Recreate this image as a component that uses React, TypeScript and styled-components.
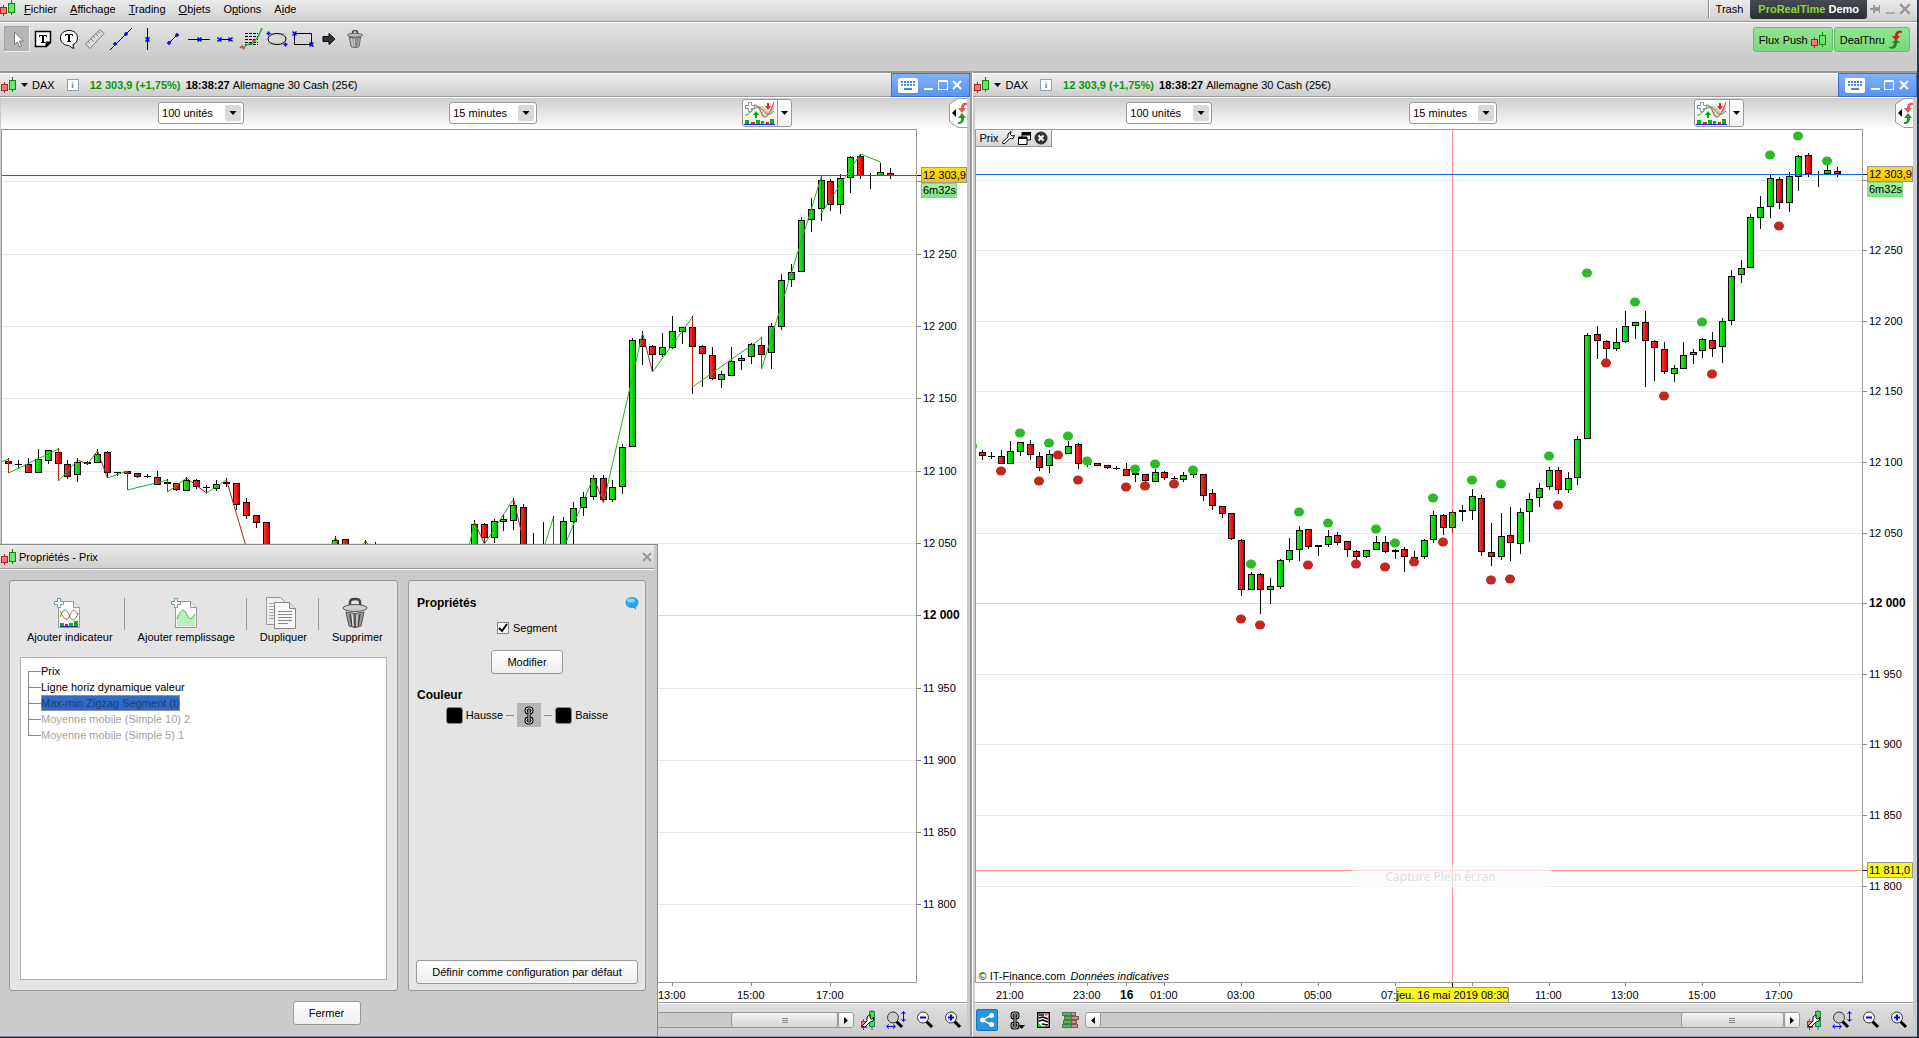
import React from 'react';
import styled, { createGlobalStyle, css } from 'styled-components';

const Global = createGlobalStyle`
  * { box-sizing: border-box; }
  html, body { margin: 0; height: 100%; background: #cbcbcb; }
  body, button, select, input {
    font: 11px/14px "Liberation Sans", Arial, sans-serif;
    color: #000;
  }
  button { margin: 0; padding: 0; border: 0; background: none; cursor: pointer; }
  svg { display: block; flex: none; }
`;

const LINE = '#999';

/* ---------- shell ---------- */

const Shell = styled.div`
  position: relative;
  display: flex;
  flex-direction: column;
  height: 100vh;
  overflow: hidden;
  border-right: 2px solid #2a3848;
  border-bottom: 1px solid #141e2c;
`;

const MenuBar = styled.header`
  display: flex;
  align-items: stretch;
  height: 23px;
  padding-right: 4px;
  background: linear-gradient(#ebebeb, #cecece);
  border-bottom: 1px solid #fff;
  box-shadow: inset 0 -1px ${LINE};
`;

const Menus = styled.nav`
  display: flex;
  align-items: center;
  gap: 13px;
  flex: 1;
  padding: 0 0 4px 8px;
`;

const MenuItem = styled.button`
  text-underline-offset: 1px;
`;

const Account = styled.span`
  margin-bottom: 4px;
  padding: 2px 7px;
  border-left: 1px solid #888;
  box-shadow: inset 1px 0 #fff;
`;

const Brand = styled.span`
  margin-bottom: 3px;
  padding: 2px 8px 0;
  border-radius: 0 0 3px 3px;
  background: linear-gradient(#454b50, #2a3036);
  color: #fff;
  font-weight: bold;
  em { color: #8fd62c; font-style: normal; }
`;

const ShellControls = styled.div`
  display: flex;
  align-items: center;
  gap: 4px;
  padding: 0 2px 4px 3px;
`;

const ToolBar = styled.div`
  display: flex;
  justify-content: space-between;
  height: 48px;
  padding: 3px 7px 0 4px;
  background: linear-gradient(#e2e2e2, #cbcbcb 70%);
`;

const Tools = styled.div`
  display: flex;
`;

const Tool = styled.button<{ $active?: boolean }>`
  display: grid;
  place-items: center;
  width: 26px;
  height: 26px;
  ${p => p.$active && css`
    background: #b6b6b6;
    box-shadow: inset -1px -1px #f0f0f0, inset 1px 1px #a5a5a5;
  `}
`;

const Services = styled.div`
  display: flex;
  gap: 1px;
  align-items: flex-start;
`;

const Service = styled.button`
  display: flex;
  align-items: center;
  gap: 3px;
  height: 25px;
  margin-top: 1px;
  padding: 0 5px;
  border: 1px solid #62c06a;
  border-radius: 3px;
  background: linear-gradient(#90e690, #7bd57b);
`;

const Desk = styled.main`
  display: flex;
  flex: 1;
  min-height: 0;
`;

/* ---------- chart window ---------- */

const Window = styled.section<{ $grow: number; $last?: boolean }>`
  display: flex;
  flex-direction: column;
  flex: ${p => p.$grow} 1 0;
  min-width: 0;
  border-top: 2px solid ${LINE};
  border-bottom: 1px solid ${LINE};
  ${p => (p.$last ? 'border-left: 1px solid #fff;' : `border-right: 2px solid ${LINE};`)}
`;

const WindowTitle = styled.div`
  display: flex;
  align-items: center;
  height: 24px;
  padding-left: 1px;
  background: linear-gradient(#eee, #cdcdcd);
  border-top: 1px solid #fff;
  border-bottom: 1px solid ${LINE};
`;

const Symbol = styled.button`
  display: flex;
  align-items: center;
  gap: 4px;
  margin-right: 12px;
  padding-left: 4px;
`;

const InfoButton = styled.button`
  width: 12px;
  height: 12px;
  margin-right: 11px;
  border: 1px solid #8fa4b0;
  background: #fff;
  color: #6d8798;
  font: bold 9px/9px "Liberation Serif", serif;
`;

const Quote = styled.strong`
  width: 96px;
  color: #0a980a;
  white-space: nowrap;
`;

const Clock = styled.strong`
  margin-right: 3px;
`;

const Name = styled.span`
  flex: 1;
  white-space: nowrap;
`;

const WindowControls = styled.div`
  display: flex;
  align-items: center;
  justify-content: space-between;
  align-self: stretch;
  width: 79px;
  margin: -1px 0;
  padding: 0 7px 0 6px;
  border: 1px solid #3f73c8;
  background: linear-gradient(#7fb0fb, #5a94ef);
`;

const Body = styled.div<{ $last?: boolean }>`
  display: flex;
  flex-direction: column;
  flex: 1;
  min-height: 0;
  padding: ${p => (p.$last ? '0 4px 0 2px' : '0 3px 0 1px')};
  background: #cbcbcb;
`;

const Selectors = styled.div`
  display: grid;
  grid-template-columns: 157fr 86px 205fr 88px 205fr 50px 157fr 18px;
  align-items: center;
  height: 32px;
  padding-bottom: 1px;
  background: linear-gradient(#cdcdcd, #fff);
  border-top: 1px solid #fff;
`;

const SelectBox = styled.div`
  position: relative;
  svg { position: absolute; right: 3px; top: 3px; pointer-events: none; }
`;

const Select = styled.select`
  display: block;
  width: 100%;
  height: 22px;
  padding: 0 3px;
  border: 1px solid ${LINE};
  border-radius: 3px;
  background: #fff;
  appearance: none;
`;

const IndicatorGroup = styled.div`
  display: flex;
  height: 28px;
  border: 1px solid ${LINE};
  border-radius: 3px;
  background: linear-gradient(#fff, #efefef);
  button { display: grid; place-items: center; flex: 1; }
  button + button { flex: none; width: 14px; border-left: 1px solid ${LINE}; }
`;

const ChartGrid = styled.div`
  display: grid;
  grid-template: minmax(0, 1fr) 19px / minmax(0, 1fr) 50px;
  flex: 1;
  min-height: 0;
  background: #fff;
`;

const Plot = styled.div`
  position: relative;
  display: flex;
  flex-direction: column;
  justify-content: space-between;
  align-items: flex-start;
  border: 1px solid ${LINE};
  > svg { position: absolute; inset: 0; width: 100%; height: 100%; }
`;

const PriceAxis = styled.div`
  padding-top: 1px;
  svg { width: 100%; height: 100%; }
`;

const TimeAxis = styled.div`
  padding-left: 1px;
  svg { width: 100%; height: 100%; }
`;

const PlotTag = styled.div`
  position: relative;
  display: flex;
  align-items: center;
  gap: 3px;
  height: 17px;
  padding: 0 3px;
  border: solid ${LINE};
  border-width: 0 1px 1px 0;
  background: linear-gradient(#f0f0f0, #d4d4d4);
`;

const Legend = styled.div`
  position: relative;
  padding-left: 2px;
  line-height: 12px;
  em { margin-left: 2px; }
`;

const GhostTip = styled.div`
  position: absolute;
  left: 377px;
  top: 736px;
  width: 198px;
  height: 21px;
  padding-left: 31px;
  border: 1px solid #f5f6f8;
  background: rgba(250, 251, 253, 0.7);
  color: #e0e0e0;
  font: 12px/20px "Noto Sans", sans-serif;
`;

const Footer = styled.div`
  display: flex;
  align-items: center;
  height: 34px;
  padding: 1px 5px 0 1px;
  border-top: 1px solid ${LINE};
  background: linear-gradient(#fff 1px, #dedede 1px, #cbcbcb);
`;

const FooterTools = styled.div<{ $end?: boolean }>`
  display: flex;
  align-items: center;
  justify-content: space-between;
  flex: none;
  width: ${p => (p.$end ? '102px' : '103px')};
  margin: ${p => (p.$end ? '0 0 0 6px' : '0 6px 0 0')};
`;

const ShareButton = styled.button`
  display: grid;
  place-items: center;
  width: 22px;
  height: 22px;
  border: 1px solid #1873b8;
  border-radius: 2px;
  background: #2795e0;
`;

const Scrollbar = styled.div`
  display: flex;
  flex: 1;
  height: 16px;
  border: 1px solid ${LINE};
  border-radius: 3px;
  background: #cbcbcb;
`;

const ScrollStep = styled.button<{ $right?: boolean }>`
  display: grid;
  place-items: center;
  width: 15px;
  border: 0 solid ${LINE};
  border-width: ${p => (p.$right ? '0 0 0 1px' : '0 1px 0 0')};
  border-radius: 2px;
  background: linear-gradient(#fff, #e4e4e4);
`;

const Thumb = styled.div`
  display: grid;
  place-items: center;
  width: 14.5%;
  margin-left: auto;
  border: solid ${LINE};
  border-width: 0 1px;
  border-radius: 3px;
  background: linear-gradient(#f2f2f2, #d6d6d6);
`;

/* ---------- dialog ---------- */

const Dialog = styled.section`
  position: absolute;
  left: 0;
  bottom: 0;
  display: flex;
  flex-direction: column;
  width: 658px;
  height: 493px;
  border: solid #8c8c8c;
  border-width: 1px 1px 1px 0;
  background: #cbcbcb;
`;

const DialogTitle = styled.div`
  display: flex;
  align-items: center;
  gap: 2px;
  height: 24px;
  margin-right: 3px;
  padding: 0 2px 0 1px;
  background: linear-gradient(#ececec, #cfcfcf);
  border-bottom: 1px solid ${LINE};
  box-shadow: 0 1px #fff;
  > :last-child { margin-left: auto; }
`;

const DialogBody = styled.div`
  display: grid;
  grid-template-columns: minmax(0, 389fr) minmax(0, 238fr);
  gap: 10px;
  flex: 1;
  padding: 11px 11px 0 9px;
`;

const Panel = styled.div<{ $form?: boolean }>`
  display: flex;
  flex-direction: column;
  padding: ${p => (p.$form ? '14px 10px 6px' : '16px 10px 10px')};
  border: 1px solid ${LINE};
  border-radius: 3px;
  background: #e4e4e4;
`;

const Actions = styled.div`
  display: flex;
  margin: 0 0 13px -7px;
`;

const Action = styled.button`
  position: relative;
  display: flex;
  flex-direction: column;
  align-items: center;
  gap: 1px;
  padding: 0 11px 0 14px;
  white-space: nowrap;
  svg { margin-left: -5px; }
  & + &::before {
    content: '';
    position: absolute;
    left: 0;
    top: 1px;
    height: 32px;
    border-left: 1px solid ${LINE};
  }
`;

const Items = styled.ul`
  flex: 1;
  margin: 0;
  padding: 5px 0;
  list-style: none;
  border: 1px solid #b0b0b0;
  background: #fff;
`;

const Item = styled.li`
  display: flex;
  height: 16px;
  padding-left: 7px;
`;

const Branch = styled.span<{ $end?: 'first' | 'last' }>`
  width: 13px;
  background:
    linear-gradient(#888, #888) 0 50% / 100% 1px no-repeat,
    linear-gradient(#888, #888) 0 ${p => (p.$end === 'first' ? '100%' : '0')} / 1px ${p => (p.$end ? '50%' : '100%')} no-repeat;
`;

const ItemName = styled.button<{ $tone?: 'off' | 'selected' }>`
  color: ${p => (p.$tone === 'off' ? '#a2a2a2' : p.$tone === 'selected' ? '#1c3d78' : '#000')};
  ${p => p.$tone === 'selected' && css`
    background: #316ac5;
    box-shadow: inset 0 0 0 1px #8a8f9a;
  `}
`;

const Heading = styled.h3<{ $spaced?: boolean }>`
  display: flex;
  justify-content: space-between;
  align-items: center;
  margin: ${p => (p.$spaced ? '13px' : '0')} -4px 0 -2px;
  font-size: 12px;
  line-height: 16px;
`;

const CheckRow = styled.label`
  display: flex;
  align-items: center;
  justify-content: center;
  gap: 4px;
  height: 14px;
  margin: 10px 0 15px;
`;

const Check = styled.input`
  appearance: none;
  width: 12px;
  height: 12px;
  margin: 0;
  border: 1px solid #888;
  background: #fff url("data:image/svg+xml,%3Csvg xmlns='http://www.w3.org/2000/svg' viewBox='0 0 10 10'%3E%3Cpath d='M1 5l3 3 5-7' fill='none' stroke='%23000' stroke-width='2'/%3E%3C/svg%3E") center / 10px no-repeat;
`;

const PushButton = styled.button<{ $w?: number }>`
  align-self: center;
  width: ${p => (p.$w ? p.$w + 'px' : '222px')};
  height: 24px;
  border: 1px solid ${LINE};
  border-radius: 3px;
  background: linear-gradient(#fff, #efefef);
  white-space: nowrap;
`;

const Colours = styled.div`
  display: flex;
  align-items: center;
  justify-content: center;
  gap: 3px;
  margin-bottom: auto;
`;

const Swatch = styled.button`
  width: 17px;
  height: 17px;
  border: 1px solid #888;
  border-radius: 3px;
  background: #000;
`;

const Dash = styled.span`
  width: 8px;
  border-top: 1px solid #888;
`;

const LinkToggle = styled.button`
  display: grid;
  place-items: center;
  width: 24px;
  height: 24px;
  background: #b4b4b4;
`;

const DialogFooter = styled.div`
  display: flex;
  justify-content: center;
  padding: 10px 4px 11px 0;
`;

/* ---------- icons ---------- */

const CandlesIcon = () => (
  <svg width="16" height="16" viewBox="0 0 16 16" shapeRendering="crispEdges">
    <rect x="0.5" y="7.5" width="6" height="6" fill="#f27b7b" stroke="#a22" />
    <rect x="8.5" y="3.5" width="6" height="9" fill="#67e667" stroke="#0b8a0b" />
    <path d="M3.5 5v2M3.5 14v2" stroke="#a22" />
    <path d="M11.5 0v3M11.5 13v2" stroke="#0b8a0b" />
  </svg>
);

const Caret = ({ w = 7 }: { w?: number }) => (
  <svg width={w} height="4" viewBox="0 0 7 4"><path d="M0 0h7L3.5 4z" /></svg>
);

const DropArrow = () => (
  <svg width="16" height="16" viewBox="0 0 16 16">
    <rect width="16" height="16" rx="2" fill="#d9d9d9" />
    <path d="M4.500 6h7l-3.500 4z" />
  </svg>
);

const Cross = ({ c, s = 10 }: { c: string; s?: number }) => (
  <svg width={s} height={s} viewBox="0 0 10 10"><path d="M1 1l8 8M9 1l-8 8" stroke={c} strokeWidth="2" /></svg>
);

const Minimise = ({ c }: { c: string }) => (
  <svg width="10" height="10" viewBox="0 0 10 10"><path d="M1 9h9" stroke={c} strokeWidth="2" /></svg>
);

const PinIcon = () => (
  <svg width="11" height="10" viewBox="0 0 11 10" fill="#999">
    <path d="M0 4h3v2H0zM3 1h2v2h4V1h1v8H9V7H5v2H3z" />
  </svg>
);

const MaximiseIcon = () => (
  <svg width="10" height="10" viewBox="0 0 10 10" shapeRendering="crispEdges">
    <path d="M.5 1v8.500h9V1" fill="none" stroke="#fff" /><path d="M0 1h10" stroke="#fff" strokeWidth="2" />
  </svg>
);

const KeyboardIcon = () => (
  <svg width="20" height="15" viewBox="0 0 20 15">
    <rect width="20" height="15" rx="2" fill="#fff" />
    <path d="M3 4h14M3 7h14" stroke="#4d86e0" strokeWidth="2" strokeDasharray="2 1" />
    <path d="M6 11h8" stroke="#4d86e0" strokeWidth="2" />
  </svg>
);

const DealArrows = () => (
  <svg width="16" height="20" viewBox="0 0 16 20">
    <path d="M14 1C9 0 7 2 7 6H4l4 5 4-5h-2c0-3 1-4 4-3z" fill="#c62222" />
    <path d="M1 18c6 2 8-1 8-5h3l-4-4-4 4h2c0 2-1 4-5 4z" fill="#1d8a33" />
  </svg>
);

const IndicatorIcon = () => (
  <svg width="32" height="24" viewBox="0 0 32 24">
    <path d="M11 5c4-2 6 14 10 11s5-9 9-14v9c-5 2-6-1-9-4-3-2-4-2-10-2z" fill="#f3b5b5" />
    <path d="M1 14c5 0 8-9 14-8 4 0 6 7 9 8-3 3-5 1-7-4-5-8-9 5-16 4z" fill="#c9efc9" />
    <path d="M8 6c4-5 7 0 9 5s4 7 7 3 4-8 6-13" fill="none" stroke="#d04040" />
    <path d="M1 14c5 1 7-8 12-8s7 6 10 7 5-1 7-3" fill="none" stroke="#35a335" />
    <path d="M4.500 1.500h3v3h3v3h-3v3h-3v-3h-3v-3h3z" fill="#fff" stroke="#7f93a0" />
    <path d="M23 2h2v3h2l-3 4-3-4h2z" fill="#e22" />
    <path d="M11 17v-3H9l3-4 3 4h-2v3z" fill="#0a0" />
    <path d="M1 19h4v4H1zM12 19h4v4h-4zM17 20h3v3h-3zM26 18h4v5h-4z" fill="#0b0" />
    <path d="M7 21h4v2H7zM22 21h3v2h-3z" fill="#c33" />
    <path d="M0 23.500h31" stroke="#22c" />
  </svg>
);

const SideTab = () => (
  <svg width="18" height="30" viewBox="0 0 18 30">
    <path d="M18 .5H9L.5 6v18L9 29.500h9" fill="#fff" stroke="#999" />
    <path d="M7 11v8l-4-4z" />
    <path d="M18 5c-4-1-6 1-6 5H9l4 5 4-5h-2c0-3 1-3 3-3z" fill="#e55" />
    <path d="M9 26c4 0 6-2 6-6h2l-4-5-4 5h3c0 3 0 4-3 4z" fill="#1a9a2a" />
  </svg>
);

const BLUE = '#0000f0';
const plus = (x: number, y: number) => `M${x - 2} ${y}h4M${x} ${y - 2}v4`;
const times = (x: number, y: number) => `M${x - 2} ${y - 2}l4 4M${x + 2} ${y - 2}l-4 4`;

const ToolSvg = ({ children }: { children: React.ReactNode }) => (
  <svg width="24" height="24" viewBox="0 0 24 24" fill="none" stroke="#000">{children}</svg>
);

const TrashIcon = () => (
  <svg width="16" height="18" viewBox="0 0 20 28" preserveAspectRatio="none">
    <path d="M7 6V3q0-2 3-2t3 2v3" fill="none" stroke="#444" strokeWidth="2" />
    <ellipse cx="10" cy="8" rx="9.500" ry="3" fill="#bbb" stroke="#444" />
    <path d="M3 11l2 15q5 3 10 0l2-15q-7 3-14 0z" fill="#aaa" stroke="#444" />
    <path d="M7 13l1 12M10 13v13M13 13l-1 12" stroke="#555" />
    <path d="M6 13l1 12M9 13v13" stroke="#eee" />
  </svg>
);

const tools: { name: string; icon: React.ReactNode }[] = [
  { name: 'Sélection', icon: <ToolSvg><path d="M9.500 5v13l3-3 2 5 2-1-2-5h4z" fill="#fff" stroke="#777" /></ToolSvg> },
  { name: 'Texte', icon: <ToolSvg><path d="M4.500 4.500h15v11l-4 4h-11z" fill="#fff" strokeWidth="1.500" /><path d="M19 15h-4v4z" fill="#000" /><path d="M8.500 10V8.500h7V10M10 15.500h4" /><path d="M12 8v8" strokeWidth="2" /></ToolSvg> },
  { name: 'Bulle', icon: <ToolSvg><path d="M12 3.500c-5 0-8.500 3-8.500 7.500s4 7.500 8 7.500l5 3-.5-4c3-1 4.500-3.500 4.500-6.500 0-4.500-3.500-7.500-8.500-7.500z" fill="#fff" /><path d="M8.500 9V7.500h7V9M10 14.500h4" /><path d="M12 7v8" strokeWidth="2" /></ToolSvg> },
  { name: 'Règle', icon: <ToolSvg><path d="M2.500 17L17 2.500l4 4L7 21.500z" fill="#ddd" stroke="#777" /><path d="M5 14l2 2M7.500 11.500l3 3M10 9l2 2M12.500 6.500l3 3M15 4.500l2 2" stroke="#777" /></ToolSvg> },
  { name: 'Droite', icon: <ToolSvg><path d="M1 23L23 1" /><path d={plus(6, 17) + plus(17, 7)} stroke={BLUE} strokeWidth="1.500" /></ToolSvg> },
  { name: 'Verticale', icon: <ToolSvg><path d="M12.500 1v22" /><path d={times(12.5, 12.5)} stroke={BLUE} strokeWidth="1.500" /></ToolSvg> },
  { name: 'Segment court', icon: <ToolSvg><path d="M8 16l8-8" /><path d={plus(8, 16) + plus(16, 8)} stroke={BLUE} strokeWidth="1.500" /></ToolSvg> },
  { name: 'Horizontale', icon: <ToolSvg><path d="M1 12.500h22" /><path d={times(12.5, 12.5)} stroke={BLUE} strokeWidth="1.500" /></ToolSvg> },
  { name: 'Segment', icon: <ToolSvg><path d="M6 12.500h12" /><path d={times(6.5, 12.5) + times(17.5, 12.5)} stroke={BLUE} strokeWidth="1.500" /></ToolSvg> },
  { name: 'Fibonacci', icon: <ToolSvg><path d="M6 6.500h13M6 9.500h13M6 12.500h13M6 15.500h13M6 17.500h13" strokeDasharray="3 1" /><path d="M4 22l3-4 7-2 5-6 4-9" stroke="#1bb51b" strokeWidth="1.500" /><path d="M1 21l2-2 2 3M13 14h3" stroke="#e33" strokeWidth="1.500" /></ToolSvg> },
  { name: 'Ellipse', icon: <ToolSvg><path d="M3.500 6.500h17v11h-17z" stroke="#bbb" /><ellipse cx="12" cy="12" rx="9" ry="5.500" /><path d={plus(3.5, 6.5) + plus(20.5, 17.5)} stroke={BLUE} strokeWidth="1.500" /></ToolSvg> },
  { name: 'Rectangle', icon: <ToolSvg><path d="M3.500 6.500h17v11h-17z" /><path d={times(3.5, 6.5) + times(20.5, 17.5)} stroke={BLUE} strokeWidth="1.500" /></ToolSvg> },
  { name: 'Flèche', icon: <ToolSvg><path d="M6 9.500h6v-3l6 5.500-6 5.500v-3H6z" fill="#333" /></ToolSvg> },
  { name: 'Corbeille', icon: <TrashIcon /> },
];

const WrenchIcon = () => (
  <svg width="14" height="14" viewBox="0 0 14 14">
    <path d="M1 11.500L7 6V3l3-2.500-.5 3L11 5l2.500-.5L12 7.500H9L3 13z" fill="#fff" stroke="#000" />
  </svg>
);

const CopyIcon = () => (
  <svg width="13" height="13" viewBox="0 0 13 13">
    <path d="M4 .5h8.500V8H4z" fill="#fff" stroke="#000" /><path d="M4 2h9" stroke="#000" strokeWidth="3" />
    <path d="M.5 5h8.500v7.500H.5z" fill="#fff" stroke="#000" /><path d="M1 6h8" stroke="#000" strokeWidth="2" />
  </svg>
);

const CloseRound = () => (
  <svg width="14" height="14" viewBox="0 0 14 14">
    <circle cx="7" cy="7" r="6.500" fill="#333" /><path d="M4.500 4.500l5 5M9.500 4.500l-5 5" stroke="#fff" strokeWidth="2" />
  </svg>
);

const ChainIcon = () => (
  <svg width="10" height="19" viewBox="0 0 10 19" fill="none">
    <rect x="2" y="2" width="6" height="5" rx="2.500" stroke="#000" strokeWidth="3" />
    <rect x="2" y="12" width="6" height="5" rx="2.500" stroke="#000" strokeWidth="3" />
    <rect x="2" y="2" width="6" height="5" rx="2.500" stroke="#fff" />
    <rect x="2" y="12" width="6" height="5" rx="2.500" stroke="#fff" />
    <path d="M5 4v11" stroke="#000" strokeWidth="3" /><path d="M5 4v11" stroke="#fff" />
  </svg>
);

const ChainMenuIcon = () => (
  <svg width="15" height="19" viewBox="0 0 15 19" fill="none">
    <rect x="2" y="2" width="6" height="5" rx="2" stroke="#000" strokeWidth="3" />
    <rect x="2" y="12" width="6" height="5" rx="2" stroke="#000" strokeWidth="3" />
    <rect x="2" y="2" width="6" height="5" rx="2" stroke="#ddd" />
    <rect x="2" y="12" width="6" height="5" rx="2" stroke="#ddd" />
    <path d="M5 4v11" stroke="#000" strokeWidth="3" /><path d="M5 4v11" stroke="#ddd" />
    <path d="M8 14h7l-3.500 4z" fill="#000" />
  </svg>
);

const NewsIcon = () => (
  <svg width="13" height="16" viewBox="0 0 13 16">
    <rect x=".75" y=".75" width="11.500" height="14.500" fill="#fff" stroke="#000" strokeWidth="1.500" />
    <path d="M2 3h5M2 6l4-1 5 2M2 9l4-1 5 2M5 12l6 1" fill="none" stroke="#000" strokeWidth="1.500" />
    <path d="M7 1h5l-3 4z" fill="#e66" /><path d="M1 15v-4l5 4z" fill="#2b2" />
  </svg>
);

const DepthIcon = () => (
  <svg width="17" height="16" viewBox="0 0 17 16" shapeRendering="crispEdges">
    <path d="M.5.5H9v3H.5zM2.500 4.500H9v3H2.500zM1.500 8.500H9v3H1.500zM.5 12.500H9v3H.5z" fill="#3c3" stroke="#666" />
    <path d="M9.500.5H13v3H9.500zM9.500 4.500h7v3h-7zM9.500 8.500h5v3h-5zM9.500 12.500h6v3h-6z" fill="#f08080" stroke="#666" />
  </svg>
);

const ShareIcon = () => (
  <svg width="14" height="14" viewBox="0 0 14 14">
    <path d="M12 2L2 7l10 5" fill="none" stroke="#fff" strokeWidth="1.500" />
    <circle cx="2.500" cy="7" r="2.500" fill="#fff" /><circle cx="11.500" cy="2.500" r="2.500" fill="#fff" /><circle cx="11.500" cy="11.500" r="2.500" fill="#fff" />
  </svg>
);

const ChartSettingsIcon = () => (
  <svg width="16" height="20" viewBox="0 0 16 20">
    <path d="M12 0v20M3.500 9v11" stroke="#555" />
    <rect x="9.500" y="1.500" width="5" height="15" fill="#4d4" stroke="#185" />
    <rect x="1.500" y="11.500" width="5" height="6" fill="#f77" stroke="#a33" />
    <path d="M2 16l5-5V7l3-2.500V8l1.500 1L14 7.500 13 11l-3 1-5 5z" fill="#fff" stroke="#000" />
  </svg>
);

const MagnifierIcon = ({ sign }: { sign?: 'minus' | 'plus' }) => (
  <svg width={sign ? 18 : 20} height="18" viewBox={sign ? '0 0 18 18' : '0 0 20 18'}>
    <path d="M10 10l6 6" stroke="#000" strokeWidth="3" />
    <circle cx="7" cy="6.500" r="5.500" fill={sign ? '#fff' : '#ccc'} stroke="#333" />
    {sign && <path d="M4 6.500h6" stroke={BLUE} strokeWidth="2" />}
    {sign === 'plus' && <path d="M7 3.500v6" stroke={BLUE} strokeWidth="2" />}
    {!sign && (
      <path d="M17.500 1v9M15.500 3l2-2.500 2 2.500M15.500 8l2 2.500 2-2.500M1 15.500h8M3 13.500l-2.500 2 2.500 2M7 13.500l2.500 2-2.500 2" fill="none" stroke={BLUE} />
    )}
  </svg>
);

const SheetIcon = ({ kind }: { kind: 'indicator' | 'fill' }) => (
  <svg width="28" height="32" viewBox="0 0 28 32">
    <path d="M5.500 4.500h15l6 6v20h-21z" fill="#fff" stroke="#999" />
    <path d="M20.500 4.500v6h6" fill="#eee" stroke="#999" />
    {kind === 'indicator' ? (
      <>
        <path d="M7 20c5-12 7-6 10 0s6 2 8-4" fill="none" stroke="#2a2" />
        <path d="M7 14c4 8 7 12 10 4s6-4 8 0" fill="none" stroke="#d44" />
        <path d="M7 26h4v3H7zM16 26h4v3h-4zM21 24h4v5h-4z" fill="#0b0" /><path d="M12 27h3v2h-3z" fill="#c22" />
        <path d="M7 29.500h18" stroke="#22c" />
      </>
    ) : (
      <>
        <path d="M7 22c5-12 7-10 10-4s5 4 8-1v12H7z" fill="#bdf0bd" />
        <path d="M7 22c5-12 7-10 10-4s5 4 8-1" fill="none" stroke="#3b3" />
      </>
    )}
    <path d="M4.500 1.500h3v3h3v3h-3v3h-3v-3h-3v-3h3z" fill="#fff" stroke="#7c93a2" />
  </svg>
);

const DuplicateIcon = () => (
  <svg width="32" height="32" viewBox="0 0 32 32">
    <path d="M1.500.5h14l5 5v22h-19z" fill="#eee" stroke="#999" />
    <path d="M4 6.500h9M4 9.500h9M4 12.500h9M4 15.500h9M4 18.500h9M4 21.500h9" stroke="#aaa" />
    <path d="M9.500 5.500h15l6 6v20h-21z" fill="#f8f8f8" stroke="#888" /><path d="M24.500 5.500v6h6" fill="#ddd" stroke="#888" />
    <path d="M13 14.500h14M13 17.500h14M13 20.500h14M13 23.500h14M13 26.500h10" stroke="#888" />
  </svg>
);

const BigTrashIcon = () => (
  <svg width="26" height="32" viewBox="0 0 26 32">
    <path d="M8 9V5q0-3 5-3t5 3v4" fill="none" stroke="#444" strokeWidth="2.500" />
    <ellipse cx="13" cy="11" rx="12" ry="3.500" fill="#ccc" stroke="#555" />
    <path d="M4 15l3 14q6 3 12 0l3-14q-9 3-18 0z" fill="#999" stroke="#555" />
    <path d="M8 17l2 12M13 17v13M18 17l-2 12" stroke="#444" strokeWidth="1.500" /><path d="M10 17l1 12M15 17v12" stroke="#eee" />
  </svg>
);

const BubbleIcon = () => (
  <svg width="14" height="13" viewBox="0 0 14 13">
    <ellipse cx="7" cy="5.500" rx="6.500" ry="5.500" fill="#22a4ee" /><path d="M7 9l4 4V8z" fill="#22a4ee" /><ellipse cx="6" cy="3.500" rx="4" ry="2" fill="#8fd4fa" />
  </svg>
);

/* ---------- market data ---------- */

// High, body top, body bottom and low, counted in ticks down from TOP.
const TICK = 50 / 212;
const TOP = 12250 + 391 * TICK;
const price = (ticks: number) => TOP - ticks * TICK;

type Bar = [number, number, number, number, 'g' | 'r' | 'd'];
const bars: Bar[] = [
  [990, 998, 1008, 1020, 'r'], [996, 1008, 1011, 1018, 'd'], [990, 1008, 1034, 1034, 'r'], [963, 993, 1034, 1034, 'g'],
  [966, 968, 998, 1008, 'g'], [960, 972, 1007, 1022, 'r'], [996, 1008, 1046, 1053, 'r'], [990, 1002, 1040, 1059, 'g'],
  [1000, 1001, 1007, 1010, 'd'], [963, 978, 1004, 1004, 'g'], [969, 972, 1034, 1049, 'r'], [1030, 1031, 1035, 1043, 'd'],
  [1029, 1029, 1038, 1040, 'r'], [1035, 1035, 1046, 1049, 'r'], [1038, 1044, 1047, 1050, 'd'], [1029, 1047, 1070, 1070, 'r'],
  [1053, 1059, 1067, 1086, 'g'], [1062, 1062, 1085, 1088, 'r'], [1047, 1056, 1088, 1088, 'g'], [1053, 1056, 1074, 1080, 'r'],
  [1070, 1074, 1077, 1092, 'd'], [1056, 1065, 1082, 1086, 'g'], [1050, 1059, 1067, 1076, 'g'], [1062, 1062, 1128, 1143, 'r'],
  [1107, 1119, 1160, 1170, 'r'], [1158, 1158, 1182, 1194, 'r'], [1179, 1179, 1259, 1262, 'r'], [1257, 1260, 1412, 1430, 'r'],
  [1356, 1362, 1412, 1412, 'g'], [1359, 1362, 1412, 1485, 'r'], [1374, 1401, 1412, 1455, 'g'], [1317, 1320, 1404, 1410, 'g'],
  [1254, 1290, 1320, 1326, 'g'], [1218, 1230, 1290, 1323, 'g'], [1227, 1227, 1283, 1289, 'r'], [1275, 1275, 1283, 1308, 'g'],
  [1230, 1248, 1277, 1281, 'g'], [1236, 1245, 1269, 1275, 'r'], [1263, 1263, 1292, 1311, 'r'], [1290, 1293, 1313, 1338, 'r'],
  [1290, 1290, 1311, 1314, 'g'], [1248, 1266, 1292, 1292, 'g'], [1248, 1266, 1296, 1299, 'r'], [1287, 1290, 1298, 1317, 'g'],
  [1281, 1287, 1313, 1356, 'r'], [1293, 1311, 1317, 1320, 'd'], [1257, 1260, 1313, 1317, 'g'], [1173, 1185, 1262, 1269, 'g'],
  [1182, 1185, 1226, 1245, 'r'], [1170, 1176, 1226, 1239, 'g'], [1155, 1170, 1178, 1203, 'g'], [1107, 1128, 1175, 1200, 'g'],
  [1125, 1134, 1298, 1308, 'r'], [1209, 1296, 1313, 1338, 'r'], [1179, 1248, 1313, 1320, 'g'], [1161, 1245, 1271, 1323, 'r'],
  [1164, 1176, 1274, 1302, 'g'], [1119, 1137, 1178, 1266, 'g'], [1089, 1104, 1136, 1161, 'g'], [1041, 1050, 1103, 1112, 'g'],
  [1041, 1050, 1112, 1122, 'r'], [1056, 1074, 1112, 1119, 'g'], [948, 957, 1076, 1095, 'g'], [639, 645, 959, 959, 'g'],
  [618, 642, 665, 717, 'r'], [660, 663, 689, 738, 'r'], [624, 666, 689, 693, 'g'], [573, 618, 668, 671, 'g'],
  [606, 606, 620, 657, 'g'], [573, 606, 665, 801, 'r'], [660, 663, 686, 783, 'r'], [666, 687, 758, 762, 'r'],
  [735, 744, 762, 786, 'g'], [666, 705, 749, 749, 'g'], [687, 696, 707, 732, 'g'], [654, 657, 695, 714, 'g'],
  [636, 660, 689, 711, 'r'], [594, 603, 683, 729, 'g'], [450, 468, 605, 615, 'g'], [420, 444, 467, 489, 'g'],
  [282, 291, 446, 446, 'g'], [228, 261, 293, 327, 'g'], [165, 174, 260, 294, 'g'], [171, 177, 248, 267, 'r'],
  [156, 168, 248, 276, 'g'], [105, 108, 170, 213, 'g'], [99, 105, 163, 171, 'r'], [153, 163, 163, 201, 'd'],
  [126, 150, 163, 163, 'g'], [141, 153, 163, 171, 'r'],
];

type Mark = [number, number];
const highs: Mark[] = [
  [-1, 980], [4, 940], [7, 970], [9, 949], [11, 1024], [16, 1048], [18, 1033], [22, 1051], [28, 1333], [33, 1177], [36, 1210],
  [41, 1228], [43, 1270], [47, 1135], [51, 1081], [54, 1093], [59, 1009], [63, 460], [68, 547], [75, 607], [82, 106], [85, 49], [88, 124],
];
const lows: Mark[] = [
  [2, 1054], [6, 1084], [8, 1006], [10, 1081], [15, 1102], [17, 1099], [20, 1093], [27, 1498], [29, 1516], [34, 1336],
  [39, 1333], [42, 1342], [45, 1327], [48, 1267], [53, 1381], [55, 1378], [60, 1156], [65, 730], [71, 829], [76, 763], [83, 319],
];

// Zigzag vertices: bar index and height in the plot.
const zigzag: Mark[] = [
  [-1, 333], [0, 329], [0, 343], [5, 319], [5, 351], [7, 330], [8, 334], [9, 321], [10, 348], [12, 341], [12, 360], [16, 350], [16, 362],
  [18, 348], [20, 363], [22, 350], [27, 520], [33, 407], [34, 440], [36, 411], [39, 450], [46, 436], [47, 392], [48, 414], [51, 369], [53, 453],
  [54, 419], [55, 387], [55, 442], [59, 347], [60, 373], [64, 203], [65, 242], [69, 187], [69, 257], [76, 208], [76, 239],
  [82, 46], [82, 83], [86, 24], [88, 32],
];

const hours: [number, string][] = [
  [3, '21:00'], [11, '23:00'], [15, '16'], [19, '01:00'], [27, '03:00'], [35, '05:00'], [43, '07:00'], [51, '09:00'],
  [59, '11:00'], [67, '13:00'], [75, '15:00'], [83, '17:00'],
];
const levels = [12300, 12250, 12200, 12150, 12100, 12050, 12000, 11950, 11900, 11850, 11800];

interface Scale { x0: number; step: number; y250: number; perPoint: number; last: number }

const makeScale = (s: Scale) => ({
  x: (i: number) => Math.floor(s.x0 + i * s.step),
  y: (p: number) => Math.floor(s.y250 + (12250 - p) * s.perPoint),
  last: s.last,
});

const label = (p: number) => `${Math.floor(p / 1000)} ${String(p % 1000).padStart(3, '0')}`;

// The part of an hour label that stays clear of the cursor's date tag.
const visibleHour = (i: number, t: string, tagged: boolean) =>
  !tagged || i < 43 || i > 55 ? t : i === 43 ? t.slice(0, 3) : '';

const svgFont = { fontFamily: '"Liberation Sans", Arial, sans-serif', fontSize: 11 };

/* ---------- chart ---------- */

interface ChartProps { scale: Scale; kind: 'zigzag' | 'points' }

const Chart = ({ scale, kind }: ChartProps) => {
  const s = makeScale(scale);
  const points = kind === 'points';
  const id = `${kind}-`;
  return (
    <ChartGrid>
      <Plot>
        <svg role="img" aria-label="Cours du DAX">
          <defs>
            <linearGradient id={id + 'g'}><stop stopColor="#2e2" /><stop offset="1" stopColor="#0b0" /></linearGradient>
            <linearGradient id={id + 'r'}><stop stopColor="#f33" /><stop offset="1" stopColor="#c00" /></linearGradient>
          </defs>
          <g shapeRendering="crispEdges">
            {levels.map(p => (
              <rect key={p} x="0" y={s.y(p)} width="100%" height="1" fill={p === 12000 ? '#d6d6d6' : '#e8e8e8'} />
            ))}
            {bars.map(([h, t, b, l, c], i) => {
              const x = s.x(i);
              const top = s.y(price(t));
              const height = Math.max(1, s.y(price(b)) - top);
              return (
                <g key={i}>
                  <rect x={x} y={s.y(price(h))} width="1" height={Math.max(1, s.y(price(l)) - s.y(price(h)))} />
                  {!(c === 'd' && t === b) && <rect x={x - 3} y={top} width="7" height={height} />}
                  {c !== 'd' && height > 2 && (
                    <rect x={x - 2} y={top + 1} width="5" height={height - 2} fill={`url(#${id}${c})`} />
                  )}
                </g>
              );
            })}
            <rect x="0" y={s.last} width="100%" height="1" fill="#0064f0" />
          </g>
          {!points && zigzag.slice(1).map(([i, y], n) => {
            const [pi, py] = zigzag[n];
            const falling = y > py && i !== 88;
            return (
              <line key={n} x1={s.x(pi) + 0.5} y1={py} x2={s.x(i) + 0.5} y2={y} stroke={falling ? '#b81c14' : '#1db51d'} />
            );
          })}
          {points && highs.map(([i, t]) => <ellipse key={i} cx={s.x(i)} cy={s.y(price(t))} rx="5" ry="4.500" fill="#2cbb24" />)}
          {points && lows.map(([i, t]) => <ellipse key={i} cx={s.x(i)} cy={s.y(price(t))} rx="5" ry="4.500" fill="#c02820" />)}
          {points && (
            <g shapeRendering="crispEdges" fill="#ff3c3c" fillOpacity="0.55">
              <rect x={s.x(49)} y="0" width="1" height="100%" />
              <rect x="0" y={s.y(11811)} width="100%" height="1" />
            </g>
          )}
        </svg>
        {points && (
          <>
            <PlotTag>Prix <WrenchIcon /><CopyIcon /><CloseRound /></PlotTag>
            <GhostTip>Capture Plein écran</GhostTip>
            <Legend>© IT-Finance.com <em>Données indicatives</em></Legend>
          </>
        )}
      </Plot>
      <PriceAxis>
        <svg {...svgFont}>
          <defs>
            <linearGradient id={id + 'gold'} x2="0" y2="1"><stop stopColor="#ffe01a" /><stop offset="1" stopColor="#f5bf0c" /></linearGradient>
            <linearGradient id={id + 'mint'} x2="0" y2="1"><stop stopColor="#a8f5a8" /><stop offset="1" stopColor="#80dd85" /></linearGradient>
          </defs>
          {levels.map(p => (
            <g key={p}>
              <rect x="0" y={s.y(p)} width="4" height="1" fill="#888" />
              {p < 12300 && (
                <text x="6" y={s.y(p) + 4} fontWeight={p === 12000 ? 'bold' : undefined} fontSize={p === 12000 ? 12 : undefined}>{label(p)}</text>
              )}
            </g>
          ))}
          <rect x="0" y={s.last} width="4" height="1" />
          <rect x="4.500" y={s.last - 7.5} width="45" height="15" fill={`url(#${id}gold)`} stroke="#999" />
          <text x="6" y={s.last + 4}>12 303,9</text>
          <rect x="4.500" y={s.last + 8.5} width="35" height="14" fill={`url(#${id}mint)`} stroke="#7edc84" />
          <text x="6" y={s.last + 19}>6m32s</text>
          {points && (
            <>
              <rect x="0" y={s.y(11811)} width="4" height="1" />
              <rect x="4.500" y={s.y(11811) - 7.5} width="45" height="15" fill="#f8f81c" stroke="#999" />
              <text x="6" y={s.y(11811) + 4}>11 811,0</text>
            </>
          )}
        </svg>
      </PriceAxis>
      <TimeAxis>
        <svg {...svgFont}>
          {hours.map(([i, t]) => (
            <g key={t}>
              <rect x={s.x(i)} y="0" width="1" height="3" fill="#888" />
              {t === '16'
                ? <text x={s.x(i) - 6} y="16" fontWeight="bold" fontSize="12">{t}</text>
                : <text x={s.x(i) - 14} y="16">{visibleHour(i, t, points)}</text>}
            </g>
          ))}
          {points && (
            <>
              <rect x={s.x(49)} y="0" width="1" height="4" />
              <rect x={s.x(49) - 55.5} y="4.500" width="112" height="15" fill="#f8f81c" stroke="#999" />
              <text x={s.x(49) + 0.5} y="16" textAnchor="middle">jeu. 16 mai 2019 08:30</text>
            </>
          )}
        </svg>
      </TimeAxis>
    </ChartGrid>
  );
};

const Picker = ({ name, value }: { name: string; value: string }) => (
  <SelectBox>
    <Select aria-label={name} defaultValue={value}><option>{value}</option></Select>
    <DropArrow />
  </SelectBox>
);

const ChartWindow = ({ grow, last, ...chart }: ChartProps & { grow: number; last?: boolean }) => (
  <Window $grow={grow} $last={last}>
    <WindowTitle>
      <CandlesIcon />
      <Symbol><Caret />DAX</Symbol>
      <InfoButton>i</InfoButton>
      <Quote>12 303,9 (+1,75%)</Quote>
      <Clock>18:38:27</Clock>
      <Name>Allemagne 30 Cash (25€)</Name>
      <WindowControls>
        <button aria-label="Clavier"><KeyboardIcon /></button>
        <button aria-label="Réduire"><Minimise c="#fff" /></button>
        <button aria-label="Agrandir"><MaximiseIcon /></button>
        <button aria-label="Fermer la fenêtre"><Cross c="#fff" /></button>
      </WindowControls>
    </WindowTitle>
    <Body $last={last}>
      <Selectors>
        <span />
        <Picker name="Historique" value="100 unités" />
        <span />
        <Picker name="Unité de temps" value="15 minutes" />
        <span />
        <IndicatorGroup>
          <button aria-label="Indicateurs"><IndicatorIcon /></button>
          <button aria-label="Liste des indicateurs"><Caret /></button>
        </IndicatorGroup>
        <span />
        <button aria-label="Passage d'ordres"><SideTab /></button>
      </Selectors>
      <Chart {...chart} />
      <Footer>
        <FooterTools>
          <ShareButton aria-label="Partager"><ShareIcon /></ShareButton>
          <button aria-label="Lier"><ChainMenuIcon /></button>
          <button aria-label="Notes"><NewsIcon /></button>
          <button aria-label="Carnet"><DepthIcon /></button>
        </FooterTools>
        <Scrollbar>
          <ScrollStep aria-label="Reculer"><svg width="4" height="7"><path d="M4 0v7L0 3.500z" /></svg></ScrollStep>
          <Thumb><svg width="6" height="7" shapeRendering="crispEdges"><path d="M0 1.500h6M0 3.500h6M0 5.500h6" stroke="#888" /></svg></Thumb>
          <ScrollStep $right aria-label="Avancer"><svg width="4" height="7"><path d="M0 0v7l4-3.500z" /></svg></ScrollStep>
        </Scrollbar>
        <FooterTools $end>
          <button aria-label="Réglages"><ChartSettingsIcon /></button>
          <button aria-label="Ajuster"><MagnifierIcon /></button>
          <button aria-label="Zoom arrière"><MagnifierIcon sign="minus" /></button>
          <button aria-label="Zoom avant"><MagnifierIcon sign="plus" /></button>
        </FooterTools>
      </Footer>
    </Body>
  </Window>
);

/* ---------- properties dialog ---------- */

const layers: { name: string; tone?: 'off' | 'selected' }[] = [
  { name: 'Prix' },
  { name: 'Ligne horiz dynamique valeur' },
  { name: 'Max-min Zigzag Segment (t)', tone: 'selected' },
  { name: 'Moyenne mobile (Simple 10) 2', tone: 'off' },
  { name: 'Moyenne mobile (Simple 5) 1', tone: 'off' },
];

const PropertiesDialog = () => (
  <Dialog role="dialog" aria-label="Propriétés - Prix">
    <DialogTitle>
      <CandlesIcon />
      <span>Propriétés - Prix</span>
      <button aria-label="Fermer la boîte"><Cross c="#999" /></button>
    </DialogTitle>
    <DialogBody>
      <Panel>
        <Actions>
          <Action><SheetIcon kind="indicator" />Ajouter indicateur</Action>
          <Action><SheetIcon kind="fill" />Ajouter remplissage</Action>
          <Action><DuplicateIcon />Dupliquer</Action>
          <Action><BigTrashIcon />Supprimer</Action>
        </Actions>
        <Items>
          {layers.map((l, n) => (
            <Item key={l.name}>
              <Branch $end={n === 0 ? 'first' : n === layers.length - 1 ? 'last' : undefined} />
              <ItemName $tone={l.tone}>{l.name}</ItemName>
            </Item>
          ))}
        </Items>
      </Panel>
      <Panel $form>
        <Heading>Propriétés <BubbleIcon /></Heading>
        <CheckRow><Check type="checkbox" defaultChecked />Segment</CheckRow>
        <PushButton $w={72}>Modifier</PushButton>
        <Heading $spaced>Couleur</Heading>
        <Colours>
          <Swatch aria-label="Couleur hausse" /><span>Hausse</span><Dash />
          <LinkToggle aria-label="Lier les couleurs"><ChainIcon /></LinkToggle>
          <Dash /><Swatch aria-label="Couleur baisse" /><span>Baisse</span>
        </Colours>
        <PushButton>Définir comme configuration par défaut</PushButton>
      </Panel>
    </DialogBody>
    <DialogFooter><PushButton $w={68}>Fermer</PushButton></DialogFooter>
  </Dialog>
);

/* ---------- app ---------- */

const menus: [string, number][] = [['Fichier', 0], ['Affichage', 0], ['Trading', 0], ['Objets', 0], ['Options', 1], ['Aide', 1]];

const App = () => (
  <Shell>
    <Global />
    <MenuBar>
      <CandlesIcon />
      <Menus>
        {menus.map(([m, k]) => (
          <MenuItem key={m}>{m.slice(0, k)}<u>{m[k]}</u>{m.slice(k + 1)}</MenuItem>
        ))}
      </Menus>
      <Account>Trash</Account>
      <Brand><em>ProRealTime</em> Demo</Brand>
      <ShellControls>
        <button aria-label="Épingler"><PinIcon /></button>
        <button aria-label="Réduire"><Minimise c="#aaa" /></button>
        <button aria-label="Quitter"><Cross c="#999" s={12} /></button>
      </ShellControls>
    </MenuBar>
    <ToolBar>
      <Tools>
        {tools.map((t, n) => <Tool key={t.name} aria-label={t.name} $active={n === 0}>{t.icon}</Tool>)}
      </Tools>
      <Services>
        <Service>Flux Push <CandlesIcon /></Service>
        <Service>DealThru <DealArrows /></Service>
      </Services>
    </ToolBar>
    <Desk>
      <ChartWindow grow={972} kind="zigzag" scale={{ x0: 6.45, step: 9.91, y250: 124.2, perPoint: 1.446, last: 45 }} />
      <ChartWindow grow={945} last kind="points" scale={{ x0: 6.1, step: 9.61, y250: 120.65, perPoint: 1.412, last: 44 }} />
    </Desk>
    <PropertiesDialog />
  </Shell>
);

export default App;
